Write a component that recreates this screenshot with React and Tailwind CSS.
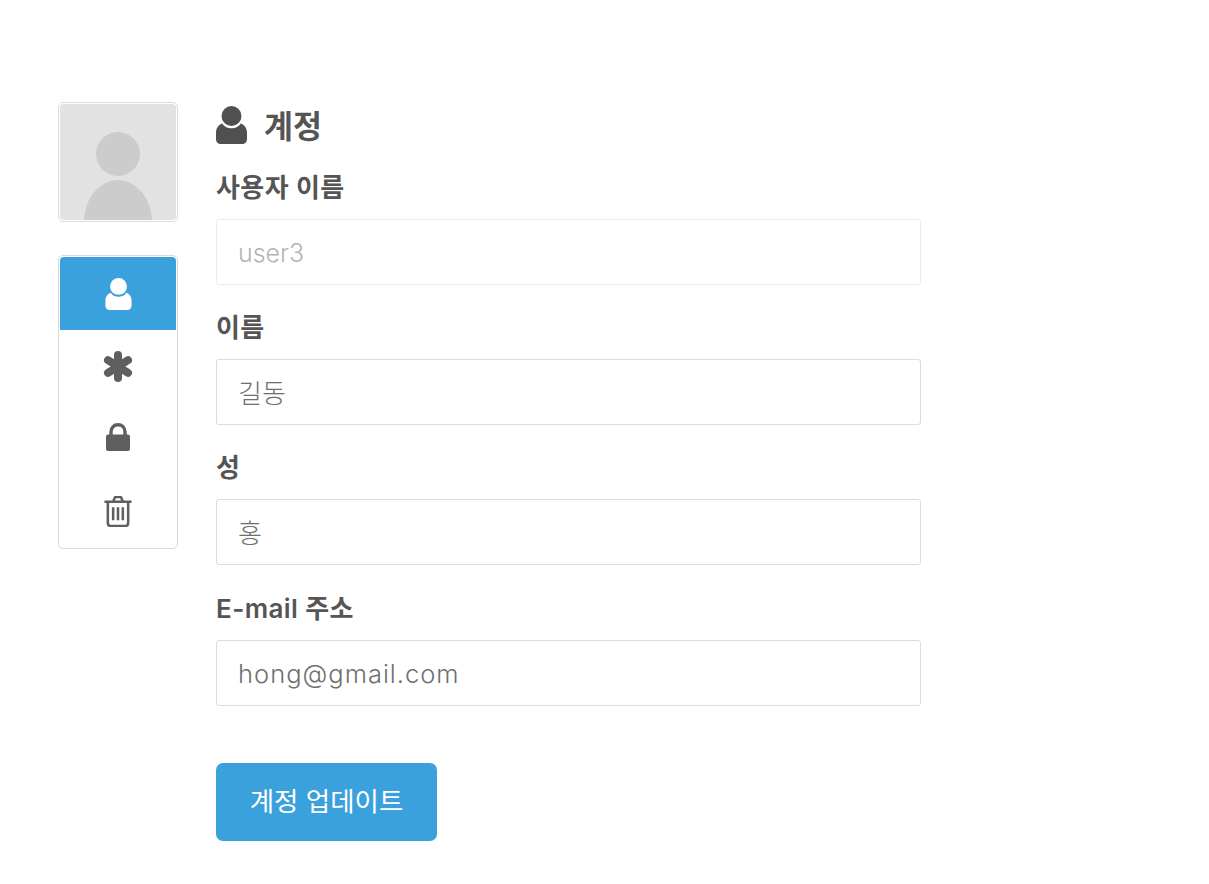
const FONT = "font-['Inter','Noto_Sans_CJK_KR',sans-serif]";

function UserIcon({ className, fill }) {
  return (
    <svg viewBox="0 0 31 38" className={className} fill={fill}>
      <circle cx="15.5" cy="10" r="10" />
      <path d="M6.2 17.5C8.6 21.2 12 22.2 15.5 22.2S22.4 21.2 24.8 17.5C28.6 18.8 31 22.4 31 26.5V33C31 36 29 38 26 38H5C2 38 0 36 0 33V26.5C0 22.4 2.4 18.8 6.2 17.5Z" />
    </svg>
  );
}

function Field({ label, value, tone, border, mb, text }) {
  return (
    <div className={mb}>
      <div className="h-[26px] whitespace-nowrap pt-px text-[26px] leading-[26px] font-semibold tracking-[0.4px] text-[#555555]">{label}</div>
      <div className={`mt-[19px] flex h-[66px] items-center rounded-[3px] border bg-white px-[21px] pt-[3px] font-light ${text} ${border} ${tone}`}>
        {value}
      </div>
    </div>
  );
}

export default function App() {
  return (
    <div className={`${FONT} flex min-h-[884px] bg-white pl-[58px] pt-[102px]`}>
      <aside className="w-[120px] shrink-0">
        <div className="h-[120px] w-[120px] overflow-hidden rounded-[5px] border border-[#dcdcdc] bg-white p-px">
          <div className="h-full w-full overflow-hidden rounded-[4px] bg-[#e2e2e2]">
            <svg viewBox="0 0 116 116" className="h-full w-full">
              <circle cx="58" cy="50" r="22" fill="#cccccc" />
              <ellipse cx="58" cy="118" rx="34" ry="42" fill="#cccccc" />
            </svg>
          </div>
        </div>
        <nav className="mt-[33px] h-[294px] w-[120px] overflow-hidden rounded-[5px] border border-[#d9d9d9] bg-white p-px pb-0">
          <div className="flex h-[73px] items-center justify-center rounded-t-[4px] bg-[#3aa1dc]">
            <UserIcon className="h-[32px] w-[27px]" fill="#ffffff" />
          </div>
          <div className="flex h-[73px] items-center justify-center">
            <svg viewBox="0 0 30 31" className="h-[31px] w-[30px]" stroke="#5f5f5f" strokeWidth="8" strokeLinecap="round">
              <path d="M15 4V27M5 9.2L25 21.8M25 9.2L5 21.8" />
            </svg>
          </div>
          <div className="flex h-[68px] items-center justify-center">
            <svg viewBox="0 0 24 28" className="h-[28px] w-[24px]">
              <path d="M5 13V9C5 4.5 8 1.8 12 1.8S19 4.5 19 9V13" fill="none" stroke="#5f5f5f" strokeWidth="3.4" />
              <path d="M2 11.5H22C23 11.5 24 12.4 24 13.5V26C24 27 23 28 22 28H2C1 28 0 27 0 26V13.5C0 12.4 1 11.5 2 11.5Z" fill="#5f5f5f" />
            </svg>
          </div>
          <div className="flex justify-center pt-[25px]">
            <svg viewBox="0 0 28 32" className="h-[31px] w-[28px]" fill="none" stroke="#5f5f5f" strokeWidth="2.6">
              <path d="M0 6H28M9 6L10.5 2C10.8 1.3 11.3 1 12 1H16C16.7 1 17.2 1.3 17.5 2L19 6" />
              <path d="M3.5 6V27.5C3.5 29.5 4.7 31 6.5 31H21.5C23.3 31 24.5 29.5 24.5 27.5V6" />
              <path d="M9 11.5V25M14 11.5V25M19 11.5V25" />
            </svg>
          </div>
        </nav>
      </aside>

      <main className="ml-[38px] w-[705px]">
        <h1 className="flex h-[42px] items-center pt-[4px]">
          <UserIcon className="h-[38px] w-[31px]" fill="#505050" />
          <span className="ml-[17px] pt-[3px] text-[31.5px] leading-none font-semibold text-[#555555]">계정</span>
        </h1>
        <div className="mt-[30px]">
          <Field label="사용자 이름" value="user3" text="text-[25px]" border="border-[#ececec]" tone="text-[#b4b4b4]" mb="mb-[29px]" />
          <Field label="이름" value="길동" text="text-[26px]" border="border-[#dcdcdc]" tone="text-[#6f6f6f]" mb="mb-[29px]" />
          <Field label="성" value="홍" text="text-[26px]" border="border-[#dcdcdc]" tone="text-[#6f6f6f]" mb="mb-[30px]" />
          <Field label="E-mail 주소" value="hong@gmail.com" text="text-[25.5px] tracking-[1px]" border="border-[#dcdcdc]" tone="text-[#6f6f6f]" />
        </div>
        <button className="mt-[57px] flex h-[78px] w-[221px] items-center justify-center rounded-[7px] bg-[#3aa1dc] text-[26.5px] font-normal text-white">
          계정 업데이트
        </button>
      </main>
    </div>
  );
}
